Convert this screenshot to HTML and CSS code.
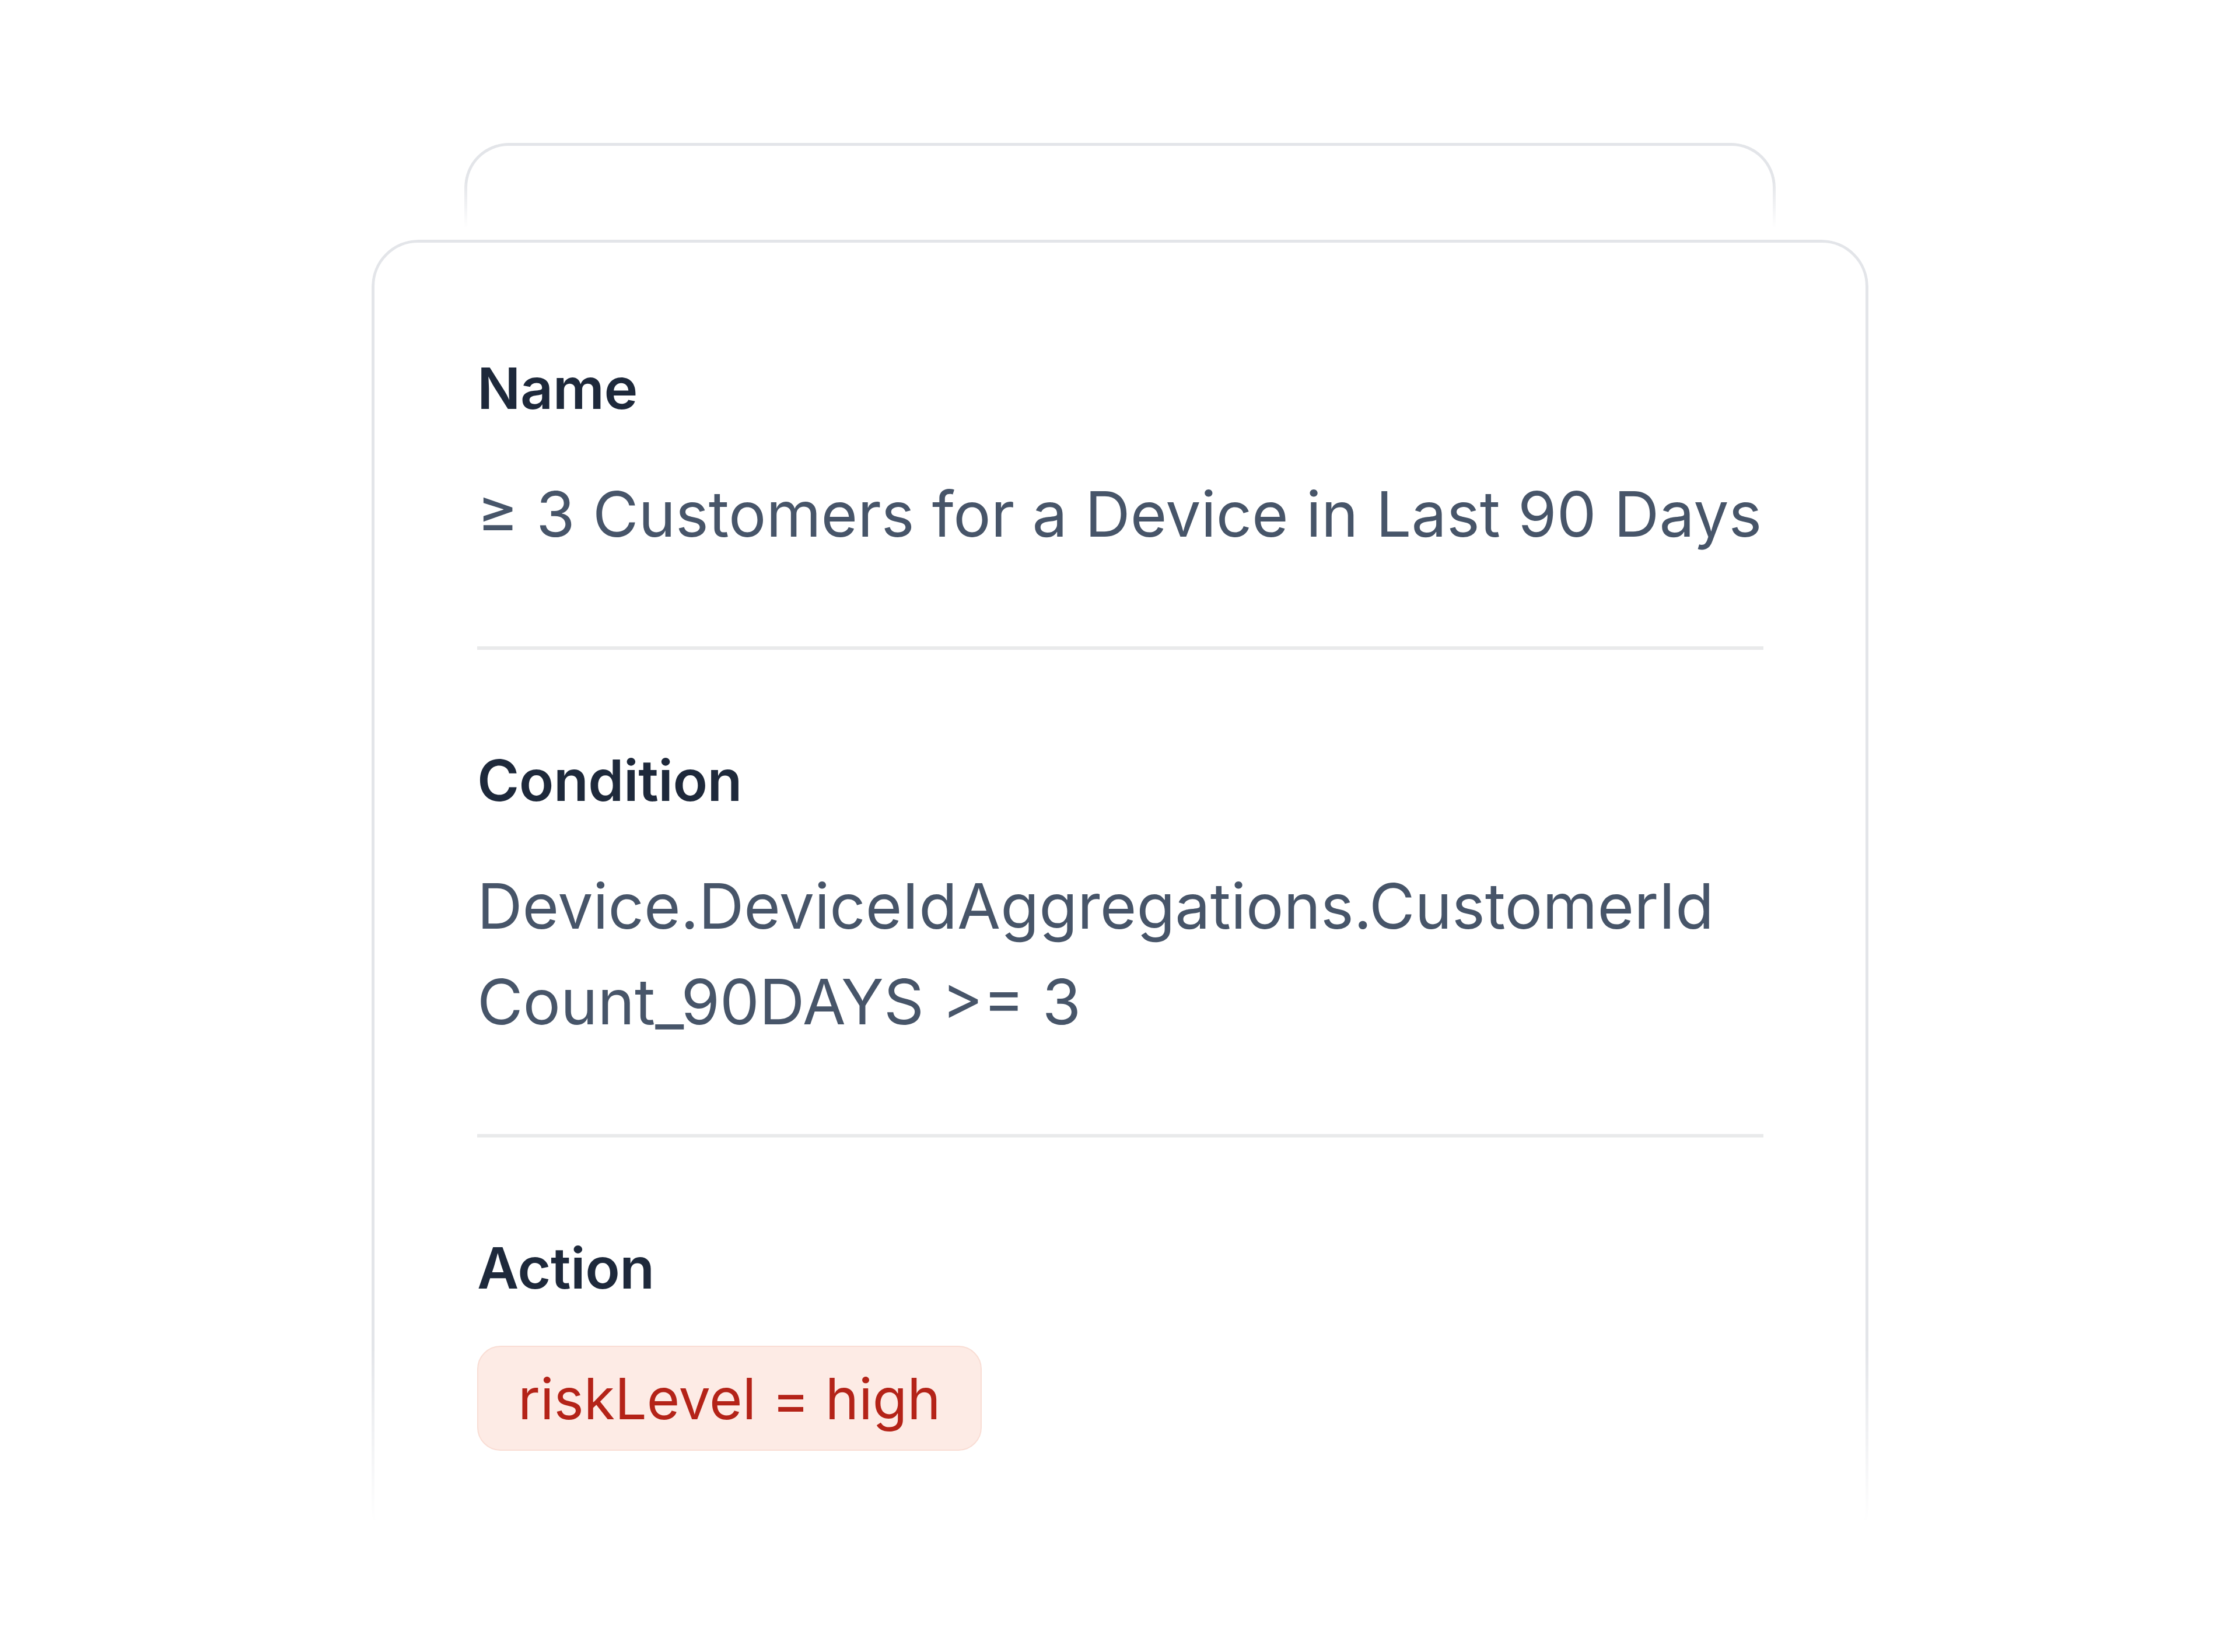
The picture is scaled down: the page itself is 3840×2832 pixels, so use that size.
FILE: index.html
```html
<!DOCTYPE html>
<html lang="en">
<head>
<meta charset="utf-8">
<title>Rule</title>
<link rel="stylesheet" href="styles.css">
</head>
<body>
<div class="stage">
  <div class="back-card"></div>
  <div class="card">
    <section class="field">
      <div class="label">Name</div>
      <div class="value">≥ 3 Customers for a Device in Last 90 Days</div>
    </section>
    <hr class="divider">
    <section class="field">
      <div class="label">Condition</div>
      <div class="value">Device.DeviceIdAggregations.CustomerId<br>Count_90DAYS &gt;= 3</div>
    </section>
    <hr class="divider">
    <section class="field">
      <div class="label">Action</div>
      <div class="badge">riskLevel = high</div>
    </section>
  </div>
</div>
</body>
</html>
```

FILE: styles.css
```css
html, body {
  margin: 0;
  padding: 0;
  background: #ffffff;
}

body {
  font-family: "Inter", "Liberation Sans", sans-serif;
}

.stage {
  padding: 245px 0 0 637px;
  width: 2566px;
}

.back-card {
  height: 166px;
  margin: 0 159px;
  box-sizing: border-box;
  border: 5px solid #e3e5e9;
  border-bottom: none;
  border-radius: 76px 76px 0 0;
  background: #ffffff;
  -webkit-mask-image: linear-gradient(to bottom, #000 0%, #000 40%, transparent 88%);
  mask-image: linear-gradient(to bottom, #000 0%, #000 40%, transparent 88%);
}

.card {
  position: relative;
  box-sizing: border-box;
  width: 2566px;
  padding: 181px 180px 180px 181px;
  background: #ffffff;
  border-radius: 80px;
}

.card::before {
  content: "";
  position: absolute;
  inset: 0;
  border: 5px solid #e3e5e9;
  border-radius: 80px;
  pointer-events: none;
  -webkit-mask-image: linear-gradient(to bottom, #000 0px, #000 1900px, transparent 2200px);
  mask-image: linear-gradient(to bottom, #000 0px, #000 1900px, transparent 2200px);
}

.field {
  display: flex;
  flex-direction: column;
  align-items: flex-start;
  gap: 60px;
}

.label {
  font-size: 98px;
  line-height: 147px;
  font-weight: 600;
  color: #1e293b;
  letter-spacing: -0.5px;
}

.value {
  font-size: 107.5px;
  line-height: 164px;
  font-weight: 400;
  color: #475569;
  letter-spacing: 0;
  white-space: nowrap;
}

.divider {
  border: none;
  height: 6px;
  background: #e9eaeb;
  margin: 145px 0 150px;
}

.badge {
  box-sizing: border-box;
  height: 180px;
  padding: 0 68px;
  display: flex;
  align-items: center;
  font-size: 97px;
  font-weight: 400;
  color: #b42318;
  background: #fdebe5;
  border: 2px solid #f9ddd4;
  border-radius: 40px;
}
```
